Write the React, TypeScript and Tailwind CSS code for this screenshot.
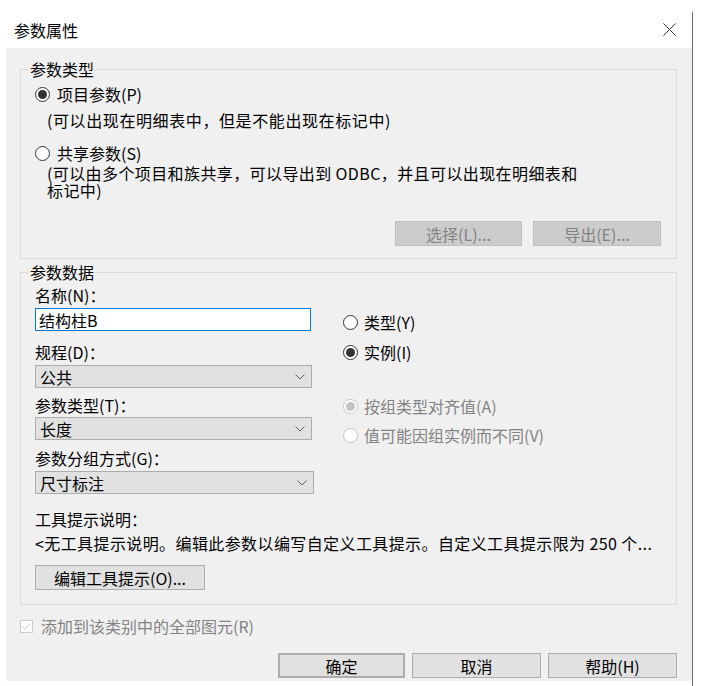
import React from "react";

function Radio({ checked = false, disabled = false }: { checked?: boolean; disabled?: boolean }) {
  const ring = disabled ? "border-[#c4c4c4]" : "border-[#333333]";
  const dot = disabled ? "bg-[#c4c4c4]" : "bg-[#333333]";
  return (
    <span className={`flex h-[15px] w-[15px] shrink-0 items-center justify-center rounded-full border bg-white ${ring}`}>
      {checked && <span className={`h-[9px] w-[9px] rounded-full ${dot}`} />}
    </span>
  );
}

function RadioRow({ label, checked = false, disabled = false, className = "" }: { label: string; checked?: boolean; disabled?: boolean; className?: string }) {
  return (
    <div className={`flex h-[20px] items-center gap-[6px] ${className}`}>
      <Radio checked={checked} disabled={disabled} />
      <span className={`leading-[20px] ${disabled ? "text-[#838383]" : ""}`}>{label}</span>
    </div>
  );
}

function Select({ value, className = "" }: { value: string; className?: string }) {
  return (
    <div className={`flex h-[23px] items-center justify-between border border-[#adadad] bg-[#e1e1e1] pl-[4px] pr-[6px] ${className}`}>
      <span className="leading-[20px]">{value}</span>
      <svg width="10" height="6" viewBox="0 0 10 6">
        <path d="M0.5 0.5L5 5L9.5 0.5" fill="none" stroke="#606060" strokeWidth="1" />
      </svg>
    </div>
  );
}

function Button({ label, className = "", disabled = false }: { label: string; className?: string; disabled?: boolean }) {
  const look = disabled
    ? "border-[#bfbfbf] bg-[#cccccc] text-[#838383]"
    : "border-[#adadad] bg-[#e1e1e1] text-black";
  return (
    <div className={`flex h-[25px] items-center justify-center border leading-[20px] ${look} ${className}`}>
      {label}
    </div>
  );
}

export default function App() {
  return (
    <div className="flex h-[686px] w-[708px] bg-white text-[16px] text-black font-['Noto_Sans_CJK_SC',sans-serif]">
      <div className="flex w-[692px] flex-col">
        <div className="flex h-[48px] items-start justify-between pl-[14px] pr-[16px]">
          <span className="mt-[20px] leading-[20px]">参数属性</span>
          <svg className="mt-[23px]" width="13" height="13" viewBox="0 0 13 13">
            <path d="M0.5 0.5L12.5 12.5M12.5 0.5L0.5 12.5" stroke="#333333" strokeWidth="1" />
          </svg>
        </div>

        <div className="ml-[6px] flex h-[633px] flex-col bg-[#f0f0f0] pl-[14px] pr-[15px] pt-[12px]">
          <fieldset className="border border-[#dadada]">
            <legend className="ml-[8px] px-[1px] leading-[18px]">参数类型</legend>
            <div className="flex flex-col pb-[12px] pl-[14px] pr-[15px]">
              <RadioRow className="mt-[6px] gap-[7px]" label="项目参数(P)" checked />
              <p className="mt-[8px] pl-[12px] leading-[16px] tracking-[0.6px]">(可以出现在明细表中，但是不能出现在标记中)</p>
              <RadioRow className="mt-[15px] gap-[7px]" label="共享参数(S)" />
              <p className="mt-[2px] pl-[12px] leading-[17px] tracking-[0.4px]">
                (可以由多个项目和族共享，可以导出到 ODBC，并且可以出现在明细表和
                <br />
                标记中)
              </p>
              <div className="mt-[22px] flex justify-end gap-[11px]">
                <Button label="选择(L)..." className="w-[127px]" disabled />
                <Button label="导出(E)..." className="w-[128px]" disabled />
              </div>
            </div>
          </fieldset>

          <fieldset className="mt-[4px] border border-[#dadada]">
            <legend className="ml-[8px] px-[1px] leading-[18px]">参数数据</legend>
            <div className="flex flex-col pb-[14px] pl-[14px] pr-[15px]">
              <div className="flex">
                <div className="flex w-[279px] flex-col">
                  <span className="mt-[5px] leading-[18px]">名称(N)：</span>
                  <div className="mt-[4px] flex h-[23px] w-[276px] items-center border border-[#0078d7] bg-white pl-[3px] leading-[20px]">
                    结构柱B
                  </div>
                  <span className="mt-[12px] leading-[18px]">规程(D)：</span>
                  <Select className="mt-[4px] w-[277px]" value="公共" />
                  <span className="mt-[8px] leading-[18px]">参数类型(T)：</span>
                  <Select className="mt-[3px] w-[277px]" value="长度" />
                  <span className="mt-[9px] leading-[18px]">参数分组方式(G)：</span>
                  <Select className="mt-[4px] w-[279px]" value="尺寸标注" />
                </div>
                <div className="ml-[29px] flex flex-col pt-[31px]">
                  <RadioRow label="类型(Y)" />
                  <RadioRow className="mt-[10px]" label="实例(I)" checked />
                  <RadioRow className="mt-[34px]" label="按组类型对齐值(A)" checked disabled />
                  <RadioRow className="mt-[9px]" label="值可能因组实例而不同(V)" disabled />
                </div>
              </div>
              <span className="mt-[16px] leading-[18px]">工具提示说明：</span>
              <span className="mt-[6px] whitespace-nowrap leading-[18px] tracking-[0.4px]">
                &lt;无工具提示说明。编辑此参数以编写自定义工具提示。自定义工具提示限为 250 个...
              </span>
              <Button label="编辑工具提示(O)..." className="mt-[13px] w-[170px]" />
            </div>
          </fieldset>

          <div className="mt-[11px] flex h-[20px] items-center gap-[8px]">
            <span className="flex h-[13px] w-[13px] items-center justify-center border border-[#cccccc] bg-white">
              <svg width="9" height="7" viewBox="0 0 9 7">
                <path d="M0.5 3.5L3.2 6L8.5 0.8" fill="none" stroke="#c4c4c4" strokeWidth="1" />
              </svg>
            </span>
            <span className="leading-[20px] text-[#838383]">添加到该类别中的全部图元(R)</span>
          </div>

          <div className="mt-[17px] flex justify-end gap-[7px]">
            <Button label="确定" className="w-[127px] border-2 border-[#0078d7]" />
            <Button label="取消" className="w-[129px]" />
            <Button label="帮助(H)" className="w-[129px]" />
          </div>
        </div>
      </div>
      <div className="mt-[12px] h-[674px] w-px bg-[#6b6b6b]" />
    </div>
  );
}
